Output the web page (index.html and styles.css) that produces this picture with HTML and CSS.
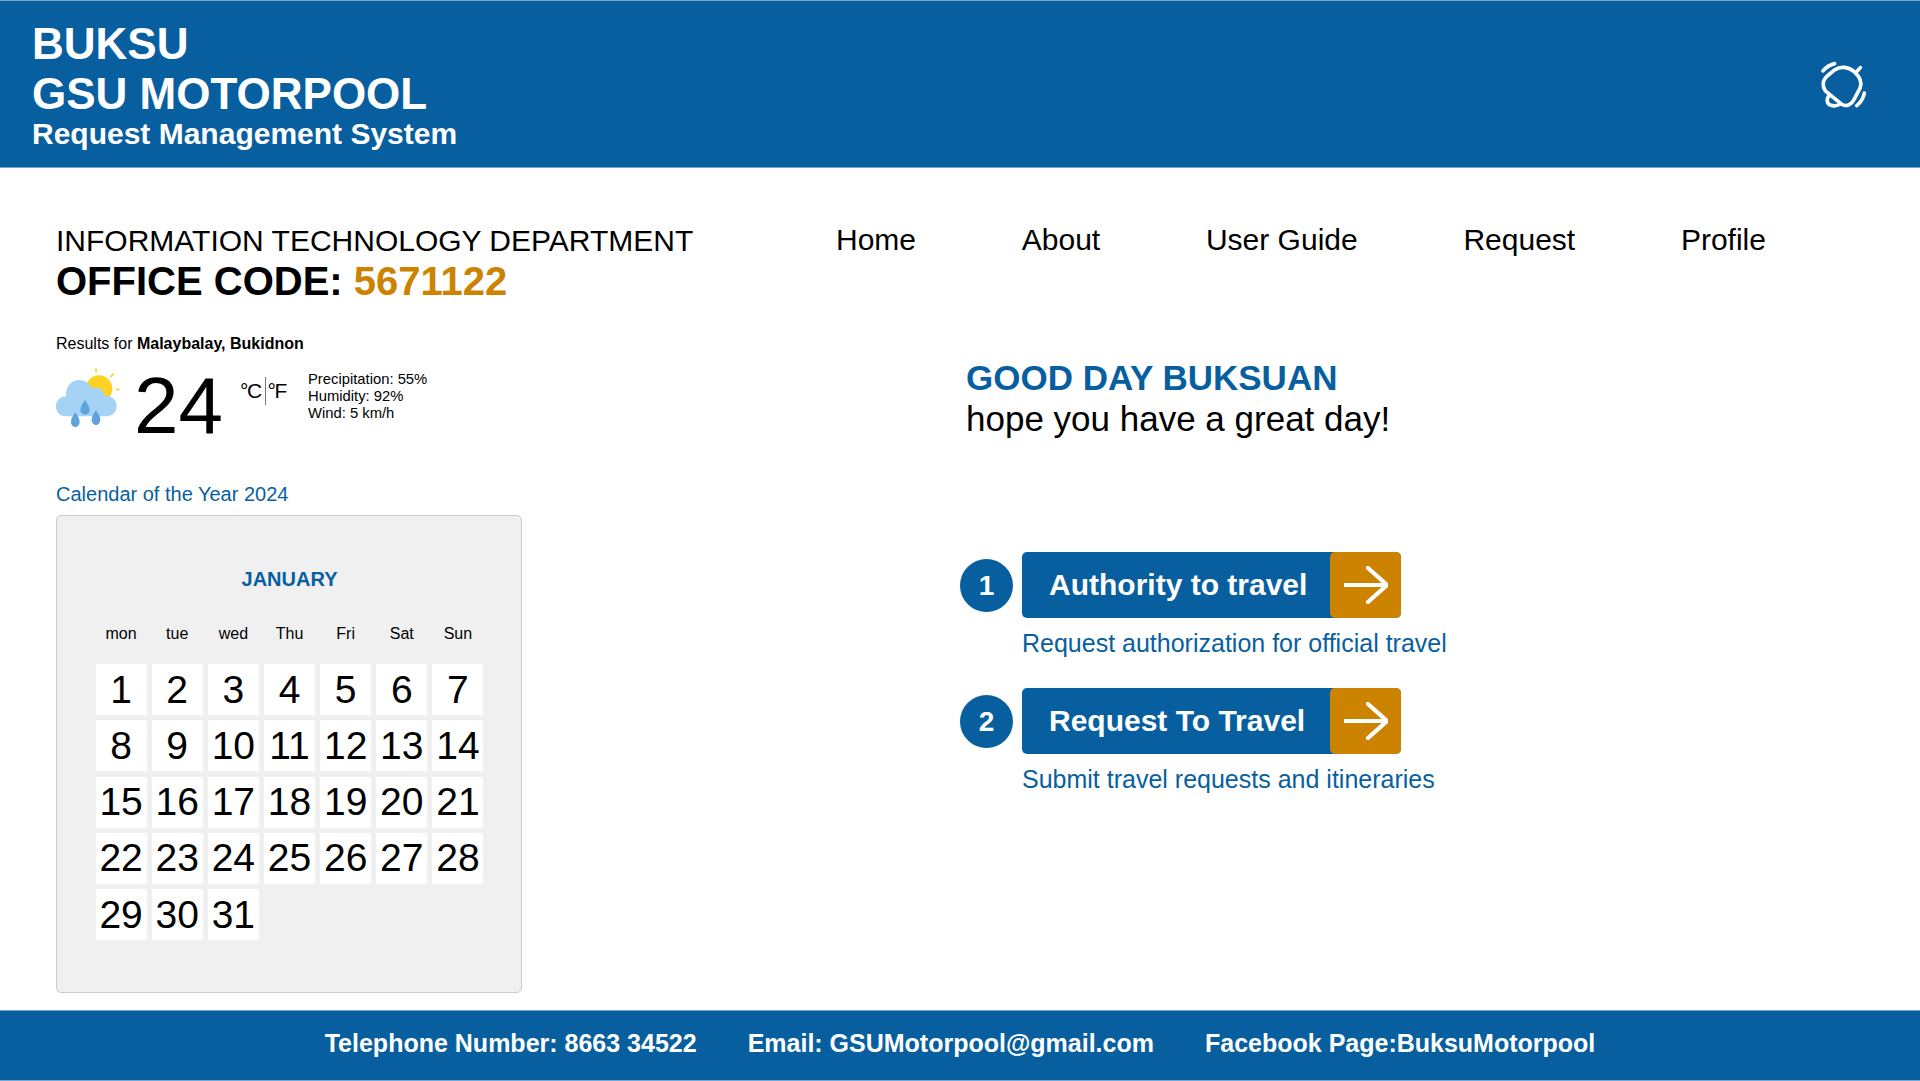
FILE: index.html
```html
<!DOCTYPE html>
<html lang="en">
<head>
    <meta charset="UTF-8">
    <meta name="viewport" content="width=device-width, initial-scale=1.0">
    <title>BUKSU GSU Motorpool</title>
    <link rel="stylesheet" href="styles.css">
</head>
<body>
    <header class="topbar">
        <div class="brand">
            <div class="brand-name">BUKSU</div>
            <div class="brand-name">GSU MOTORPOOL</div>
            <div class="brand-sub">Request Management System</div>
        </div>
        <svg class="bell" viewBox="120 60 140 145" fill="none" stroke="#fff" stroke-width="11" stroke-linecap="round" stroke-linejoin="round">
            <path d="M128 90C138 78 150 71 163 68"/>
            <path d="M230 195C242 185 250 172 253 157"/>
            <path d="M241 80L228 94"/>
            <path d="M135 150C125 135 127 118 140 106L163 87C182 74 205 78 222 92C240 108 247 125 240 142L222 176C214 192 200 198 186 192Z"/>
            <path d="M148 163C137 175 139 190 152 194C162 197 172 195 180 190"/>
        </svg>
    </header>

    <main class="content">
        <section class="left">
            <div class="dept">INFORMATION TECHNOLOGY DEPARTMENT</div>
            <div class="office">OFFICE CODE: <span class="office-code">5671122</span></div>

            <div class="results">Results for <b>Malaybalay, Bukidnon</b></div>
            <div class="weather">
                <svg class="weather-icon" viewBox="48 155 192 180">
                    <g stroke="#fdd225" stroke-width="5" stroke-linecap="round">
                        <path d="M168 158V166"/>
                        <path d="M220 173L212 181"/>
                        <path d="M229 219H237"/>
                    </g>
                    <circle cx="177" cy="217" r="40" fill="#fdd225"/>
                    <path d="M78 300C58 300 48 285 48 270C48 252 62 240 78 240C76 212 94 191 116 191C134 191 148 200 156 216C172 208 192 220 192 238C212 236 230 250 230 270C230 288 216 300 198 300Z" fill="#a5d3f6"/>
                    <g fill="#5fa3dc">
                        <path d="M135 250C126 264 121 272 121 281C121 289 127 295 135 295C143 295 149 289 149 281C149 272 144 264 135 250Z"/>
                        <path d="M106 288C98 300 93 307 93 317C93 325 99 332 106 332C113 332 119 325 119 317C119 307 114 300 106 288Z"/>
                        <path d="M168 282C160 294 155 301 155 311C155 319 161 326 168 326C175 326 181 319 181 311C181 301 176 294 168 282Z"/>
                    </g>
                </svg>
                <div class="temp">24</div>
                <div class="units"><span>°C</span><span class="units-f">°F</span></div>
                <div class="details">
                    <div>Precipitation: 55%</div>
                    <div>Humidity: 92%</div>
                    <div>Wind: 5 km/h</div>
                </div>
            </div>

            <div class="cal-title">Calendar of the Year 2024</div>
            <div class="calendar">
                <div class="month">JANUARY</div>
                <div class="weekdays">
                    <span>mon</span><span>tue</span><span>wed</span><span>Thu</span><span>Fri</span><span>Sat</span><span>Sun</span>
                </div>
                <div class="days">
                    <div class="day">1</div><div class="day">2</div><div class="day">3</div><div class="day">4</div><div class="day">5</div><div class="day">6</div><div class="day">7</div>
                    <div class="day">8</div><div class="day">9</div><div class="day">10</div><div class="day">11</div><div class="day">12</div><div class="day">13</div><div class="day">14</div>
                    <div class="day">15</div><div class="day">16</div><div class="day">17</div><div class="day">18</div><div class="day">19</div><div class="day">20</div><div class="day">21</div>
                    <div class="day">22</div><div class="day">23</div><div class="day">24</div><div class="day">25</div><div class="day">26</div><div class="day">27</div><div class="day">28</div>
                    <div class="day">29</div><div class="day">30</div><div class="day">31</div>
                </div>
            </div>
        </section>

        <section class="right">
            <nav class="nav">
                <a href="#">Home</a>
                <a href="#">About</a>
                <a href="#">User Guide</a>
                <a href="#">Request</a>
                <a href="#">Profile</a>
            </nav>

            <div class="greeting">
                <div class="greeting-title">GOOD DAY BUKSUAN</div>
                <div class="greeting-sub">hope you have a great day!</div>
            </div>

            <div class="steps">
                <div class="step">
                    <div class="step-num">1</div>
                    <div class="step-body">
                        <a class="step-btn" href="#">
                            <span class="step-label">Authority to travel</span>
                            <span class="step-arrow">
                                <svg viewBox="0 0 44 38" fill="none" stroke="#fff" stroke-width="4.2" stroke-linecap="round" stroke-linejoin="round"><path d="M1 19H43M24 2L43 19L24 36"/></svg>
                            </span>
                        </a>
                        <div class="step-note">Request authorization for official travel</div>
                    </div>
                </div>
                <div class="step">
                    <div class="step-num">2</div>
                    <div class="step-body">
                        <a class="step-btn" href="#">
                            <span class="step-label">Request To Travel</span>
                            <span class="step-arrow">
                                <svg viewBox="0 0 44 38" fill="none" stroke="#fff" stroke-width="4.2" stroke-linecap="round" stroke-linejoin="round"><path d="M1 19H43M24 2L43 19L24 36"/></svg>
                            </span>
                        </a>
                        <div class="step-note">Submit travel requests and itineraries</div>
                    </div>
                </div>
            </div>
        </section>
    </main>

    <footer class="footer">
        <span>Telephone Number: 8663 34522</span>
        <span>Email: GSUMotorpool@gmail.com</span>
        <span>Facebook Page:BuksuMotorpool</span>
    </footer>
</body>
</html>
```

FILE: styles.css
```css
* {
    box-sizing: border-box;
}

body {
    font-family: "Liberation Sans", Arial, sans-serif;
    background-color: white;
    color: black;
    margin: 0;
    height: 1081px;
    display: flex;
    flex-direction: column;
    overflow: hidden;
}

.topbar {
    height: 168px;
    flex: none;
    background-color: #085fa0;
    border-top: 1px solid #7aa7cb;
    border-bottom: 1px solid #7aa7cb;
    color: white;
    display: flex;
    justify-content: space-between;
    align-items: center;
    padding: 1px 53px 0 32px;
}

.brand-name {
    font-size: 44px;
    font-weight: bold;
    line-height: 50px;
}

.brand-sub {
    font-size: 30px;
    font-weight: bold;
    line-height: 32px;
    margin-top: -1px;
}

.bell {
    width: 47px;
    height: 48px;
}

.content {
    flex: 1;
    display: flex;
    padding: 52px 0 0 56px;
}

.left {
    width: 780px;
}

.dept {
    font-size: 30px;
    line-height: 39px;
    padding-top: 1px;
}

.office {
    font-size: 40px;
    font-weight: bold;
    line-height: 42px;
}

.office-code {
    color: #cc8400;
}

.results {
    font-size: 16px;
    margin-top: 32px;
    line-height: 20px;
}

.weather {
    display: flex;
    align-items: flex-start;
    margin-top: 12px;
}

.weather-icon {
    width: 64px;
    height: 60px;
    margin-top: 2px;
}

.temp {
    font-size: 80px;
    line-height: 80px;
    margin-left: 14px;
}

.units {
    font-size: 21px;
    line-height: 28px;
    letter-spacing: -1.5px;
    margin: 11px 0 0 17px;
    width: 46px;
    display: flex;
}

.units-f {
    border-left: 1px solid #777;
    margin-left: 4px;
    padding-left: 2px;
}

.details {
    font-size: 14.8px;
    line-height: 17px;
    margin: 5px 0 0 22px;
}

.cal-title {
    color: #085fa0;
    font-size: 20px;
    line-height: 24px;
    margin-top: 36px;
}

.calendar {
    width: 466px;
    height: 478px;
    margin-top: 9px;
    background-color: #f0f0f0;
    border: 1px solid #ccc;
    border-radius: 5px;
    padding: 51px 37.5px 0 38.5px;
}

.month {
    color: #085fa0;
    font-size: 20px;
    font-weight: bold;
    text-align: center;
    line-height: 24px;
}

.weekdays {
    display: grid;
    grid-template-columns: repeat(7, 1fr);
    gap: 5px;
    margin-top: 33px;
    font-size: 16px;
    line-height: 20px;
    text-align: center;
}

.days {
    display: grid;
    grid-template-columns: repeat(7, 1fr);
    grid-auto-rows: 51px;
    gap: 5.25px 5px;
    margin-top: 20px;
}

.day {
    background-color: white;
    font-size: 39px;
    display: flex;
    align-items: center;
    justify-content: center;
}

.right {
    flex: 1;
}

.nav {
    display: flex;
    gap: 105.75px;
    font-size: 30px;
    line-height: 40px;
}

.nav a {
    color: black;
    text-decoration: none;
}

.greeting {
    margin: 97px 0 0 130px;
}

.greeting-title {
    color: #085fa0;
    font-size: 35px;
    font-weight: bold;
    line-height: 42px;
}

.greeting-sub {
    font-size: 35px;
    line-height: 40px;
}

.steps {
    margin: 113px 0 0 124px;
    display: flex;
    flex-direction: column;
    gap: 30px;
}

.step {
    display: flex;
    align-items: flex-start;
    gap: 9px;
}

.step-num {
    width: 53px;
    height: 53px;
    margin-top: 7px;
    border-radius: 50%;
    background-color: #085fa0;
    color: white;
    font-size: 28px;
    font-weight: bold;
    display: flex;
    align-items: center;
    justify-content: center;
}

.step-btn {
    width: 379px;
    height: 66px;
    background-color: #085fa0;
    border-radius: 5px;
    color: white;
    text-decoration: none;
    display: flex;
    justify-content: space-between;
}

.step-label {
    font-size: 30px;
    font-weight: bold;
    line-height: 66px;
    padding-left: 27px;
}

.step-arrow {
    width: 71px;
    background-color: #cc8400;
    border-radius: 5px;
    display: flex;
    align-items: center;
    justify-content: center;
}

.step-arrow svg {
    width: 44px;
    height: 38px;
}

.step-note {
    color: #085fa0;
    font-size: 25px;
    line-height: 30px;
    margin-top: 10px;
}

.footer {
    height: 71px;
    flex: none;
    background-color: #085fa0;
    border-top: 1px solid #7aa7cb;
    border-bottom: 1px solid #7aa7cb;
    color: white;
    font-size: 25px;
    font-weight: bold;
    display: flex;
    justify-content: center;
    align-items: center;
    gap: 51px;
    padding-bottom: 4px;
}
```
